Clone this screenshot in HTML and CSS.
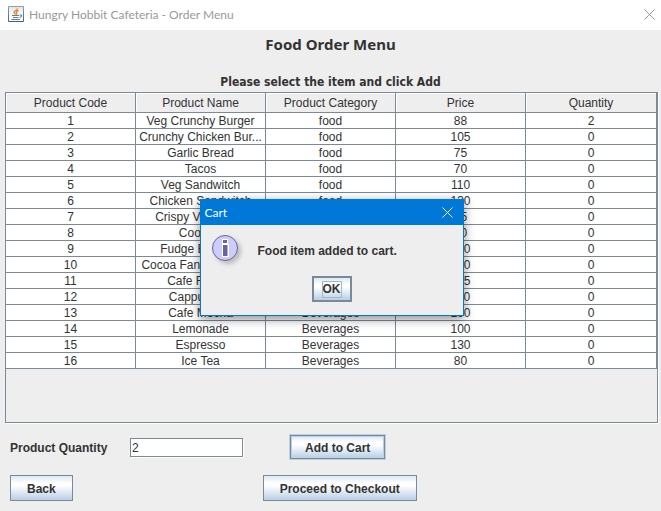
FILE: index.html
```html
<!DOCTYPE html>
<html lang="en">
<head>
<meta charset="utf-8">
<title>Hungry Hobbit Cafeteria - Order Menu</title>
<link rel="stylesheet" href="styles.css">
</head>
<body>
<div class="window">
  <header class="titlebar">
    <svg class="app-icon" viewBox="0 0 16 16" aria-hidden="true">
      <defs>
        <linearGradient id="tile" x1="0" y1="0" x2="0" y2="1"><stop offset="0" stop-color="#8ba3b5"/><stop offset="1" stop-color="#3f637f"/></linearGradient>
        <linearGradient id="face" x1="0" y1="0" x2="0" y2="1"><stop offset="0" stop-color="#dfe6ea"/><stop offset=".6" stop-color="#fff"/></linearGradient>
      </defs>
      <rect width="16" height="16" rx="1" fill="url(#tile)"/>
      <rect x="1" y="1" width="14" height="14" fill="url(#face)"/>
      <path d="M9.500 2.500C9.500 4.500 5.500 4.800 6 6.500Q6.300 7.500 7.500 8.500M10.500 4.500C8 5.500 8 6.300 8.700 7.200Q9 8 8.300 8.700" fill="none" stroke="#ee8a2c" stroke-width="1.500"/>
      <path d="M4 9.500H11M5 11.500H10.500M3.500 13.500H12M11.500 9C14.500 8.500 14 11 11.500 11.500" fill="none" stroke="#56809f" stroke-width="1.100"/>
    </svg>
    <span class="title">Hungry Hobbit Cafeteria - Order Menu</span>
    <button class="close" type="button" aria-label="Close"><svg viewBox="0 0 11 11"><path d="M.5 .5L10.500 10.500M10.500 .5L.5 10.500"/></svg></button>
  </header>
  <main>
    <h1>Food Order Menu</h1>
    <h2>Please select the item and click Add</h2>
    <div class="table-pane">
      <table>
        <colgroup><col class="column" span="4"><col></colgroup>
        <thead><tr><th>Product Code</th><th>Product Name</th><th>Product Category</th><th>Price</th><th>Quantity</th></tr></thead>
        <tbody>
          <tr><td>1</td><td>Veg Crunchy Burger</td><td>food</td><td>88</td><td>2</td></tr>
          <tr><td>2</td><td>Crunchy Chicken Bur...</td><td>food</td><td>105</td><td>0</td></tr>
          <tr><td>3</td><td>Garlic Bread</td><td>food</td><td>75</td><td>0</td></tr>
          <tr><td>4</td><td>Tacos</td><td>food</td><td>70</td><td>0</td></tr>
          <tr><td>5</td><td>Veg Sandwitch</td><td>food</td><td>110</td><td>0</td></tr>
          <tr><td>6</td><td>Chicken Sandwitch</td><td>food</td><td>130</td><td>0</td></tr>
          <tr><td>7</td><td>Crispy Veg Pizza</td><td>food</td><td>85</td><td>0</td></tr>
          <tr><td>8</td><td>Cookies</td><td>Dessert</td><td>50</td><td>0</td></tr>
          <tr><td>9</td><td>Fudge Brownie</td><td>Dessert</td><td>160</td><td>0</td></tr>
          <tr><td>10</td><td>Cocoa Fantasy Shake</td><td>Beverages</td><td>120</td><td>0</td></tr>
          <tr><td>11</td><td>Cafe Frappe</td><td>Beverages</td><td>145</td><td>0</td></tr>
          <tr><td>12</td><td>Cappuccino</td><td>Beverages</td><td>110</td><td>0</td></tr>
          <tr><td>13</td><td>Cafe Mocha</td><td>Beverages</td><td>190</td><td>0</td></tr>
          <tr><td>14</td><td>Lemonade</td><td>Beverages</td><td>100</td><td>0</td></tr>
          <tr><td>15</td><td>Espresso</td><td>Beverages</td><td>130</td><td>0</td></tr>
          <tr><td>16</td><td>Ice Tea</td><td>Beverages</td><td>80</td><td>0</td></tr>
        </tbody>
      </table>
    </div>
    <form class="controls">
      <div class="row">
        <label for="quantity">Product Quantity</label>
        <input id="quantity" type="text" value="2">
        <button class="btn focus" type="button">Add to Cart</button>
      </div>
      <div class="row">
        <button class="btn back" type="button">Back</button>
        <button class="btn" type="button">Proceed to Checkout</button>
      </div>
    </form>
  </main>
  <section class="dialog" role="dialog" aria-labelledby="dialog-title">
    <header class="dialog-bar">
      <span id="dialog-title">Cart</span>
      <button class="close" type="button" aria-label="Close dialog"><svg viewBox="0 0 11 11"><path d="M.5 .5L10.500 10.500M10.500 .5L.5 10.500"/></svg></button>
    </header>
    <div class="message">
      <svg class="info" viewBox="0 0 32 32" aria-hidden="true">
        <circle cx="13" cy="13" r="12.500" fill="#ccccff" stroke="#666699"/>
        <path d="M10 4H16V9H17V22H10Z" fill="#fff"/>
        <path d="M11 5H15V8H11ZM11 10H15.500V21H11Z" fill="#666699"/>
      </svg>
      <p>Food item added to cart.</p>
    </div>
    <button class="btn ok" type="button"><span>OK</span></button>
  </section>
</div>
</body>
</html>
```

FILE: styles.css
```css
* { box-sizing: border-box; }
body {
  margin: 0;
  background: #eee;
  color: #333;
  font: 12px/15px "Liberation Sans", Arial, sans-serif;
}
.window { position: relative; min-height: 100vh; }
.titlebar {
  display: flex;
  align-items: center;
  height: 30px;
  padding: 0 6px 2px 8px;
  background: #fff;
  color: #999;
  font-family: Lato, sans-serif;
}
.app-icon { width: 16px; height: 16px; }
.title { flex: 1; margin-left: 5px; }
.close { display: flex; padding: 0; border: 0; background: none; color: inherit; }
.close svg { width: 11px; height: 11px; fill: none; stroke: currentColor; }
h1, h2 {
  margin: 0;
  text-align: center;
  line-height: 20px;
}
h1 { padding: 4px 0 18px; font-family: "Noto Sans", sans-serif; font-size: 15px; }
h2 { font-family: "DejaVu Sans Condensed", "DejaVu Sans", sans-serif; font-size: 12px; }
.table-pane {
  height: 331px;
  margin: 0 3px 0 5px;
  border: 1px solid #7a8a99;
  box-shadow: 1px 1px #fff;
}
table { width: 100%; table-layout: fixed; border-spacing: 0; }
.column { width: 130px; }
th, td {
  height: 16px;
  padding: 2px 0 0;
  border: solid #7a8a99;
  border-width: 0 1px 1px 0;
  background: #fff;
  text-align: center;
  font-weight: normal;
  line-height: 13px;
  white-space: nowrap;
}
th { height: 20px; background: #eee; box-shadow: inset 1px 1px #fff; }
.controls { padding: 11px 10px; }
.row { display: flex; align-items: center; height: 26px; }
.row + .row { margin-top: 15px; }
label { width: 120px; padding-top: 2px; font-weight: bold; }
input {
  width: 113px;
  height: 19px;
  margin-right: 47px;
  padding: 2px 1px 0;
  border: 1px solid #7a8a99;
  box-shadow: 1px 1px #fff;
  background: #fff;
  color: #333;
  font: inherit;
}
.btn {
  height: 26px;
  padding: 2px 16px 0;
  border: 1px solid #7a8a99;
  background: linear-gradient(#dde8f3, #fff 30%, #fff 40%, #b8cfe5);
  color: #333;
  font: bold 12px/15px "Liberation Sans", Arial, sans-serif;
}
.focus { height: 24px; padding: 2px 14px 0; box-shadow: 0 0 0 1px #b8cfe5, inset 0 0 0 1px #b8cfe5; }
.back { margin-right: 190px; }
.dialog {
  position: absolute;
  top: 199px;
  left: calc(50% - 131px);
  width: 264px;
  height: 117px;
  border: 1px solid #0078d7;
  background: #eee;
  box-shadow: 0 3px 10px rgba(0, 0, 0, .45);
}
.dialog-bar {
  display: flex;
  align-items: center;
  justify-content: space-between;
  height: 25px;
  padding: 0 10px 0 4px;
  background: #0078d7;
  color: #fff;
  font-family: Lato, sans-serif;
}
.message { display: flex; align-items: center; height: 51px; padding: 0 11px; }
.info { width: 32px; height: 32px; margin-right: 14px; filter: drop-shadow(3px 3px 2px #9999); }
.message p { margin: 0; padding-top: 2px; font-weight: bold; }
.ok { display: block; margin: 0 auto; padding: 0 8px; border-width: 2px; }
.ok span { display: block; border: 1px solid #a3b8cc; }
```
